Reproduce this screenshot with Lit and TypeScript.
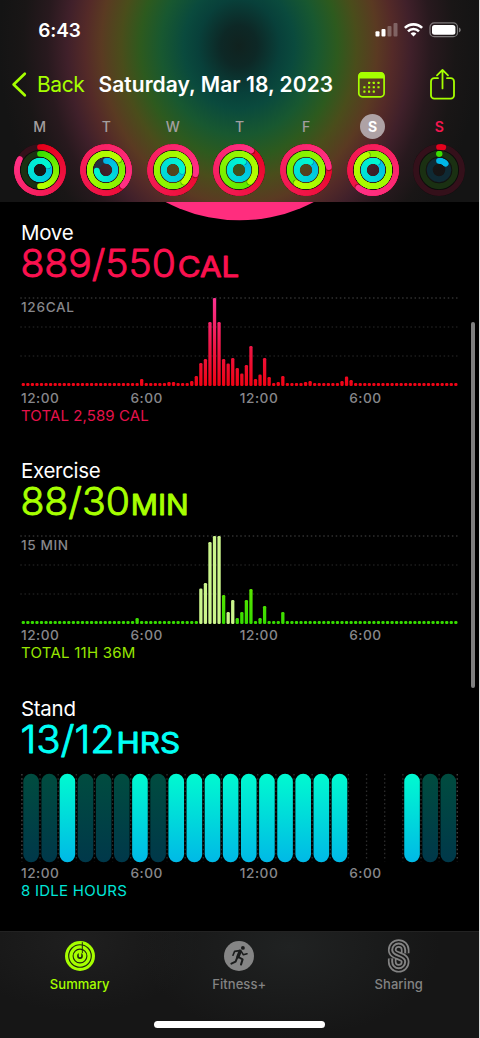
import { LitElement, html, svg, css } from "lit";
import { customElement, property } from "lit/decorators.js";

type Rgb = [number, number, number];

const mix = (a: Rgb, b: Rgb, t: number) =>
  `rgb(${a.map((v, i) => Math.round(v + (b[i] - v) * t)).join(",")})`;

/** Three nested activity rings. Each value is a fraction of the goal and may exceed 1. */
@customElement("activity-rings")
class ActivityRings extends LitElement {
  @property({ attribute: false }) values: number[] = [0, 0, 0];

  static styles = css`
    :host { display: block; width: 54px; height: 54px; }
    svg { display: block; }
  `;

  private ring(r: number, value: number, from: Rgb, to: Rgb, track: string) {
    const at = (f: number) => {
      const a = f * Math.PI * 2;
      return [27 + r * Math.sin(a), 27 - r * Math.cos(a)];
    };
    const steps = Math.max(2, Math.ceil(value * 48));
    const segs = [];
    for (let i = 0; i < steps; i++) {
      const f0 = (i / steps) * value;
      const f1 = ((i + 1) / steps) * value;
      const [x0, y0] = at(f0);
      const [x1, y1] = at(f1);
      const t = value < 0.3 ? 0.05 : i / (steps - 1);
      if (i === steps - 1 && value > 1) {
        const [sx, sy] = at(f1 + 0.008);
        segs.push(svg`<circle cx=${sx} cy=${sy} r="2.9" fill="#000" fill-opacity="0.3"/>`);
      }
      segs.push(svg`<path d="M${x0} ${y0}A${r} ${r} 0 0 1 ${x1} ${y1}" stroke=${mix(from, to, t)}
        stroke-width="5.7" stroke-linecap="round" fill="none"/>`);
    }
    return svg`<circle cx="27" cy="27" r=${r} fill="none" stroke=${track} stroke-width="5.9"/>${segs}`;
  }

  render() {
    const [m, e, s] = this.values;
    return html`<svg width="54" height="54" viewBox="0 0 54 54">
      <circle cx="27" cy="27" r="19.5" fill="none" stroke="#000" stroke-opacity="0.45" stroke-width="13"/>
      ${this.ring(23, m, [228, 0, 24], [255, 48, 132], "#34101a")}
      ${this.ring(16.2, e, [52, 222, 0], [184, 255, 0], "#1a3012")}
      ${this.ring(9.2, s, [0, 180, 232], [0, 246, 208], m < 0.1 ? "#0f2a34" : "#26303f")}
    </svg>`;
  }
}

const DAYS = [
  { d: "M", v: [0.83, 0.5, 1.17] },
  { d: "T", v: [1.37, 2.14, 0.74] },
  { d: "W", v: [1.28, 2.38, 1.27] },
  { d: "T", v: [1.09, 1.38, 1.08] },
  { d: "F", v: [1.23, 1.6, 1.08] },
  { d: "S", v: [1.61, 2.94, 1.08], on: true },
  { d: "S", v: [0.03, 0.006, 0.13], today: true },
];

const MOVE: Record<number, number> = {
  26: 7, 32: 4, 33: 4, 37: 5, 38: 10, 39: 23, 40: 27, 41: 64, 42: 88, 43: 64, 44: 27, 45: 22.5,
  46: 28, 47: 18, 48: 12.5, 49: 21, 50: 40, 51: 7, 52: 11.5, 53: 28, 54: 9, 56: 4, 57: 10,
  62: 4, 63: 5, 70: 5, 71: 9.5, 72: 6,
};
const EXERCISE: Record<number, number> = {
  25: 6, 39: 35.5, 40: 41, 41: 82, 42: 88, 43: 88, 44: 29, 45: 12, 46: 24, 47: 6, 48: 12,
  49: 24, 50: 35, 52: 6, 53: 18, 57: 12,
};
const WORKOUT = [39, 40, 41, 42, 43, 45, 46];
/** One character per hour: 1 = stood, 0 = idle, - = no data. */
const STAND = "001000101111111111---100";

@customElement("app-root")
class AppRoot extends LitElement {
  static styles = css`
    :host {
      display: flex; flex-direction: column; position: relative; box-sizing: border-box;
      width: 480px; height: 1038px; overflow: hidden; background: #000;
      border-right: 1px solid #dcdcdc; color: #fff;
      font-family: Inter, "Liberation Sans", sans-serif;
    }
    svg { display: block; overflow: visible; }
    header {
      height: 202px; flex: none;
      background: radial-gradient(ellipse 240px 274px at 239px 46px,
        #10221f 0, #0d2826 7.5%, #08403a 17%, #0a4a3d 23%, #185830 32.5%, #2d5a1e 41%,
        #4a4d1b 49%, #5a3a22 57.5%, #542a28 64%, #40202a 71.5%, #28191e 80%, #191616 90%, #141414 100%);
    }
    .status { display: flex; align-items: center; height: 60px; padding: 0 17px 0 38.3px; }
    .time { font-size: 19px; font-weight: 600; flex: 1; letter-spacing: -0.1px; }
    .nav { display: flex; align-items: center; height: 49px; padding-left: 11.5px; }
    .back { font-size: 21px; color: #a6ff00; margin-left: 10.5px; width: 61.5px; letter-spacing: -0.4px; }
    .date { font-size: 21px; font-weight: 600; width: 259.7px; letter-spacing: 0.05px; white-space: nowrap; }
    .share { margin-left: 45px; }
    .week { display: grid; grid-template-columns: repeat(7, 66.6px); padding: 5px 0 0 6.4px; }
    .day { display: flex; flex-direction: column; align-items: center; gap: 4px; }
    .letter {
      width: 25px; height: 25px; border-radius: 50%; line-height: 25px; text-align: center;
      font-size: 14px; font-weight: 500; color: #a39e9f;
    }
    .on { background: #aea2a5; color: #fff; font-weight: 700; }
    .today { color: #f5164f; font-weight: 600; }
    main { flex: 1; position: relative; padding-left: 21px; overflow: hidden; }
    .crest { height: 19.3px; margin-left: -21px; overflow: hidden; }
    .card { height: 237.7px; display: flex; flex-direction: column; }
    .title { font-size: 20.5px; line-height: 24px; letter-spacing: -0.3px; }
    .value { height: 52px; flex: none; }
    .value text { stroke-width: 0.9px; stroke-linejoin: round; font-weight: 300; }
    .value .unit { font-weight: 400; }
    .plot { flex: none; }
    .axis {
      display: grid; grid-template-columns: repeat(4, 109.4px); margin-top: 2.3px; line-height: 16px;
      font-size: 13.7px; font-weight: 550; color: #87878b; letter-spacing: 0.5px;
    }
    .total { font-size: 15px; line-height: 18px; margin-top: 1.2px; letter-spacing: 0.1px; }
    .t-exercise, .t-stand { letter-spacing: 0.25px; }
    .peak { font-size: 13.6px; font-weight: 550; fill: #87878b; }
    .move { fill: #fa114f; stroke: #fa114f; }
    .exercise { fill: #a6ff00; stroke: #a6ff00; }
    .stand { fill: #00fff6; stroke: #00fff6; }
    .t-move { color: #e5124b; }
    .t-exercise { color: #97e600; }
    .t-stand { color: #00e5d8; }
    .scroll {
      position: absolute; right: 4px; top: 120px; width: 3.6px; height: 366px;
      border-radius: 2px; background: #808080;
    }
    footer {
      flex: none; height: 107px; box-sizing: border-box; border-top: 1px solid #222;
      background: radial-gradient(ellipse 150px 90px at 290px 15px, #202222, rgba(24,24,24,0)),
        radial-gradient(ellipse 120px 70px at 80px 10px, #1f1f1f, rgba(24,24,24,0)), #161616;
      display: flex; flex-direction: column; align-items: center;
    }
    .tabs { display: grid; grid-template-columns: repeat(3, 159.5px); width: 479px; height: 89px; }
    .tab {
      display: flex; flex-direction: column; align-items: center; gap: 3.4px; padding-top: 6.5px;
      font-size: 13px; font-weight: 500; line-height: 17px; color: #838383; letter-spacing: 0.05px;
    }
    .tabs .active { color: #a6ff00; }
    .home { width: 171.5px; height: 7px; border-radius: 4px; background: #fff; }
  `;

  private gridLines() {
    return [1, 30, 59].map(
      (y, i) => svg`<line x1="-0.7" x2="436.5" y1=${y} y2=${y} stroke=${i ? "#2b2b2b" : "#484848"}
        stroke-width="1.2" stroke-dasharray="1.5 2.65"/>`
    );
  }

  private bars(data: Record<number, number>, color: (i: number) => string) {
    return Array.from({ length: 96 }, (_, i) => {
      const h = data[i] ?? 3;
      return svg`<rect x=${0.65 + i * 4.553} y=${89 - h} width="3.3" height=${h} rx="1.3" fill=${color(i)}/>`;
    });
  }

  private moveChart() {
    return html`<svg class="plot" width="437" height="90" viewBox="0 0 437 90">
      <defs><linearGradient id="mg" gradientUnits="userSpaceOnUse" x1="0" y1="89" x2="0" y2="1">
        <stop offset="0" stop-color="#f00314"/><stop offset="0.4" stop-color="#ee1440"/><stop offset="1" stop-color="#fb3291"/>
      </linearGradient></defs>
      ${this.gridLines()}
      <text class="peak" x="0" y="15.3" textLength="53">126CAL</text>
      ${this.bars(MOVE, () => "url(#mg)")}
    </svg>`;
  }

  private exerciseChart() {
    return html`<svg class="plot" width="437" height="90" viewBox="0 0 437 90">
      <defs><linearGradient id="eg" gradientUnits="userSpaceOnUse" x1="0" y1="89" x2="0" y2="1">
        <stop offset="0" stop-color="#36dc00"/><stop offset="1" stop-color="#8df000"/>
      </linearGradient></defs>
      ${this.gridLines()}
      <text class="peak" x="0" y="15.3" textLength="47">15 MIN</text>
      ${this.bars(EXERCISE, (i) => (WORKOUT.includes(i) ? "#cbf58c" : "url(#eg)"))}
    </svg>`;
  }

  private standChart() {
    return html`<svg class="plot" width="437" height="90" viewBox="0 0 437 90">
      <defs>
        <linearGradient id="sg" x1="0" y1="1" x2="0" y2="0">
          <stop offset="0" stop-color="#00b9e6"/><stop offset="1" stop-color="#00fad0"/>
        </linearGradient>
        <linearGradient id="sd" x1="0" y1="1" x2="0" y2="0">
          <stop offset="0" stop-color="#00384a"/><stop offset="1" stop-color="#004c3f"/>
        </linearGradient>
      </defs>
      ${Array.from({ length: 25 }, (_, i) => svg`<line x1=${0.9 + i * 18.14} x2=${0.9 + i * 18.14} y1="1" y2="88.5"
        stroke=${i % 24 ? "#2d2d2d" : "#4a4a4a"} stroke-width="1.3" stroke-dasharray="1.5 2.65"/>`)}
      ${[...STAND].map((s, i) =>
        s === "-"
          ? null
          : svg`<rect x=${2.3 + i * 18.14} y="0.7" width="15.6" height="88.6" rx="7.8" fill=${s === "1" ? "url(#sg)" : "url(#sd)"}/>`
      )}
    </svg>`;
  }

  private card(kind: string, title: string, num: string, numW: number, unit: string, unitX: number, unitW: number, chart: unknown, total: string) {
    return html`<section class="card">
      <div class="title">${title}</div>
      <svg class="value ${kind}" width="300" height="52">
        <text x="-0.6" y="32.2" font-size="37.6" textLength=${numW} lengthAdjust="spacingAndGlyphs">${num}</text>
        <text class="unit" x=${unitX} y="32.2" font-size="28.2" textLength=${unitW} lengthAdjust="spacingAndGlyphs">${unit}</text>
      </svg>
      ${chart}
      <div class="axis"><span>12:00</span><span>6:00</span><span>12:00</span><span>6:00</span></div>
      <div class="total t-${kind}">${total}</div>
    </section>`;
  }

  private statusIcons() {
    return html`<svg width="87" height="16" viewBox="0 0 87 16">
      <g fill="#fff">
        <rect x="0.5" y="9.3" width="4" height="5.2" rx="1"/>
        <rect x="6.5" y="7" width="4" height="7.5" rx="1"/>
        <g fill-opacity="0.28"><rect x="12.5" y="4" width="4" height="10.5" rx="1"/><rect x="18.5" y="1" width="4" height="13.5" rx="1"/></g>
      </g>
      <g fill="none" stroke="#fff" stroke-width="2.6">
        <path d="M29.9 5.9A12.2 12.2 0 0 1 47.1 5.9"/>
        <path d="M33 9.3A7.8 7.8 0 0 1 44 9.3"/>
      </g>
      <path d="M38.5 14.6L35.6 11.6A4.2 4.2 0 0 1 41.4 11.6Z" fill="#fff"/>
      <rect x="55" y="0.9" width="27.5" height="13.8" rx="4.3" fill="none" stroke="#fff" stroke-opacity="0.42" stroke-width="1.2"/>
      <rect x="57" y="2.9" width="23.4" height="9.8" rx="2.5" fill="#fff"/>
      <path d="M84 5.4C86.3 6.2 86.3 9.4 84 10.2Z" fill="#fff" fill-opacity="0.45"/>
    </svg>`;
  }

  private calendarIcon() {
    const dots = [];
    for (let r = 0; r < 3; r++)
      for (let c = 0; c < 4; c++)
        if (!(r === 0 && c === 0) && !(r === 2 && c === 3))
          dots.push(svg`<rect x=${5.3 + c * 4.7} y=${9.8 + r * 4.4} width="2.2" height="2.1" rx="0.4"/>`);
    return html`<svg width="27" height="26" viewBox="0 0 27 26" fill="#a6ff00">
      <rect x="0.8" y="0.8" width="25.3" height="24" rx="3.6" fill="none" stroke="#a6ff00" stroke-width="1.7"/>
      <path d="M0.5 6.6V4A3.8 3.8 0 0 1 4.3 0.2H22.6A3.8 3.8 0 0 1 26.4 4V6.6Z"/>${dots}
    </svg>`;
  }

  private shareIcon() {
    return html`<svg class="share" width="25" height="31" viewBox="0 0 25 31" fill="none" stroke="#a6ff00"
      stroke-width="1.8" stroke-linecap="round" stroke-linejoin="round">
      <path d="M8 9.2H4.3A3.3 3.3 0 0 0 1 12.5V26.4A3.3 3.3 0 0 0 4.3 29.7H20.7A3.3 3.3 0 0 0 24 26.4V12.5A3.3 3.3 0 0 0 20.7 9.2H17"/>
      <path d="M12.5 19.4V0.9M7 6.4L12.5 0.9L18 6.4"/>
    </svg>`;
  }

  private summaryIcon() {
    return html`<svg width="34" height="34" viewBox="0 0 34 34" fill="none">
      <circle cx="17" cy="17" r="15" fill="#a6ff00"/>
      <g stroke="#1c2410" stroke-width="1.1">
        <circle cx="17" cy="17" r="11.3"/><circle cx="17" cy="17" r="6.9"/>
        <path d="M19.3 3.2V14.2" stroke-width="1"/>
      </g>
      <circle cx="17" cy="17" r="2.9" fill="#1c2410"/>
      <path d="M17 12.4V17" stroke="#a6ff00" stroke-width="2.5" stroke-linecap="round"/>
    </svg>`;
  }

  private fitnessIcon() {
    return html`<svg width="34" height="34" viewBox="0 0 34 34" fill="none" stroke="#1b1c1c" stroke-linecap="round" stroke-linejoin="round">
      <circle cx="17" cy="17" r="15" fill="#858585" stroke="none"/>
      <circle cx="20.9" cy="8.9" r="1.9" fill="#1b1c1c" stroke="none"/>
      <path d="M18.2 12.2L15.9 17.8" stroke-width="3.4"/>
      <path d="M17.6 11.6L12.6 12.4L11 16.2M19.4 12.6L21.4 15.8L25 14.8" stroke-width="1.6"/>
      <path d="M16.4 18L20.6 20.4L19 25.6" stroke-width="2"/>
      <path d="M15.2 18.6L13.6 22.6L9.4 24.6" stroke-width="2"/>
    </svg>`;
  }

  private sharingIcon() {
    const d = "M17.2 14.2V11A6.5 6.5 0 0 0 4.2 11C4.2 18 17.2 15.8 17.2 22.8A6.5 6.5 0 0 1 4.2 22.8V19.6";
    return html`<svg width="21.4" height="34" viewBox="0 0 21.4 34" fill="none">
      <path d=${d} stroke="#838383" stroke-width="8.6"/>
      <path d=${d} stroke="#191919" stroke-width="5.2"/>
      <path d=${d} stroke="#838383" stroke-width="2"/>
    </svg>`;
  }

  render() {
    return html`
      <header>
        <div class="status"><span class="time">6:43</span>${this.statusIcons()}</div>
        <div class="nav">
          <svg width="15" height="25" viewBox="0 0 15 25" fill="none" stroke="#a6ff00" stroke-width="2.7" stroke-linecap="round" stroke-linejoin="round">
            <path d="M12.8 1.8L1.6 12.5L12.8 23.2"/>
          </svg>
          <span class="back">Back</span>
          <span class="date">Saturday, Mar 18, 2023</span>
          ${this.calendarIcon()}${this.shareIcon()}
        </div>
        <div class="week">
          ${DAYS.map((x) => html`<div class="day">
            <span class="letter ${x.on ? "on" : ""} ${x.today ? "today" : ""}">${x.d}</span>
            <activity-rings .values=${x.v}></activity-rings>
          </div>`)}
        </div>
      </header>
      <main>
        <div class="crest"><svg width="479" height="19"><circle cx="239.7" cy="-141" r="159.3" fill="#ff2d7e"/></svg></div>
        ${this.card("move", "Move", "889/550", 155.5, "CAL", 156.8, 61.5, this.moveChart(), "TOTAL 2,589 CAL")}
        ${this.card("exercise", "Exercise", "88/30", 109.5, "MIN", 109.8, 58, this.exerciseChart(), "TOTAL 11H 36M")}
        ${this.card("stand", "Stand", "13/12", 94.5, "HRS", 95.6, 63.5, this.standChart(), "8 IDLE HOURS")}
        <div class="scroll"></div>
      </main>
      <footer>
        <div class="tabs">
          <div class="tab active">${this.summaryIcon()}<span>Summary</span></div>
          <div class="tab">${this.fitnessIcon()}<span>Fitness+</span></div>
          <div class="tab">${this.sharingIcon()}<span>Sharing</span></div>
        </div>
        <div class="home"></div>
      </footer>`;
  }
}
